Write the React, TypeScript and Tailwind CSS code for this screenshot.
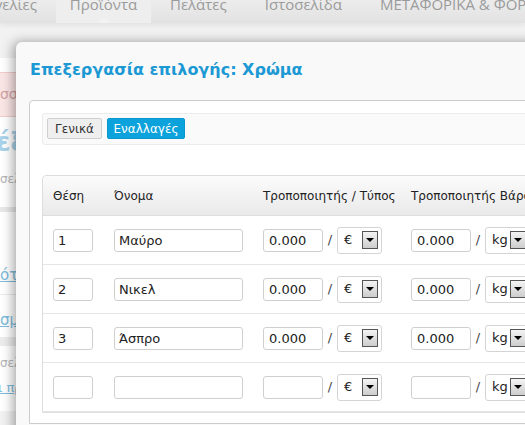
import React from "react"

const navItems = ["Πελάτες", "Ιστοσελίδα", "ΜΕΤΑΦΟΡΙΚΑ & ΦΟΡΟΛΟΓΙΑ"]

const rows = [
  { pos: "1", name: "Μαύρο", price: "0.000", weight: "0.000" },
  { pos: "2", name: "Νικελ", price: "0.000", weight: "0.000" },
  { pos: "3", name: "Άσπρο", price: "0.000", weight: "0.000" },
  { pos: "", name: "", price: "", weight: "" },
]

function Field({ value, className }: { value: string; className: string }) {
  return (
    <div
      className={`h-[23px] border border-[#cfcfcf] rounded-[3px] bg-white px-[4px] text-[13px] leading-[21px] text-[#222] whitespace-nowrap overflow-hidden ${className}`}
    >
      {value}
    </div>
  )
}

function Select({ value }: { value: string }) {
  return (
    <div className="flex items-center justify-between shrink-0 w-[45px] h-[27px] border border-[#d4d4d4] rounded-[3px] bg-white pl-[6px] pr-[3px] text-[13px] text-[#222]">
      <span>{value}</span>
      <span className="flex items-center justify-center w-[16px] h-[18px] border border-[#555] bg-gradient-to-b from-[#f4f4f4] to-[#cdcdcd]">
        <span className="w-0 h-0 border-x-[4px] border-x-transparent border-t-[4px] border-t-black" />
      </span>
    </div>
  )
}

export default function App() {
  return (
    <div className="relative w-[525px] h-[425px] overflow-hidden bg-[#f2f2f2] font-['DejaVu_Sans',sans-serif]">
      {/* top navigation */}
      <nav className="flex h-[23px] bg-gradient-to-b from-[#ececec] to-[#e2e2e2] text-[15px] text-[#9b9b9b] font-['Open_Sans',sans-serif] whitespace-nowrap shadow-[0_2px_6px_rgba(0,0,0,0.08)]">
        <div className="flex justify-end shrink-0 w-[56px] pr-[19px]">
          <span className="shrink-0 mt-[-3px] leading-[15px]">Παραγγελίες</span>
        </div>
        <div className="relative flex justify-center shrink-0 w-[95px] bg-[#eeeeee]">
          <span className="mt-[-3px] leading-[15px]">Προϊόντα</span>
          <span className="absolute bottom-0 left-[42px] w-0 h-0 border-x-[6px] border-x-transparent border-b-[6px] border-b-[#f2f2f2]" />
        </div>
        {navItems.map((item) => (
          <div key={item} className="shrink-0 px-[19px]">
            <span className="block mt-[-3px] leading-[15px]">{item}</span>
          </div>
        ))}
      </nav>

      {/* page behind the dialog */}
      <div className="mt-[35px] bg-white text-[13px] whitespace-nowrap">
        <div className="h-[14px]" />
        <div className="h-[45px] border-y border-[#f1cccc] bg-[#fbe6e6] text-[14px] leading-[43px] text-[#d3a3a3]">σσαρμογή</div>
        <div className="h-[52px] pt-[12px] text-[26px] font-bold leading-[26px] text-[#a9d3ea] ml-[-4px]">έξ</div>
        <div className="h-[38px] text-[12px] text-[#b5b5b5] leading-[20px]">σελίδα</div>
        <div className="h-[5px] bg-[#e8e8e8]" />
        <div className="h-[52px]" />
        <div className="h-[30px] text-[15px] text-[#7ebbdc] underline leading-[22px]">ότητα</div>
        <div className="h-[1px] bg-[#ececec]" />
        <div className="h-[16px]" />
        <div className="h-[26px] text-[15px] text-[#7ebbdc] underline leading-[18px]">σμοί</div>
        <div className="h-[9px] bg-[#ececec]" />
        <div className="h-[35px] pt-[10px] text-[12px] text-[#b5b5b5] leading-[14px]">σελίδα</div>
        <div className="h-[30px] text-[13px] text-[#7ebbdc] underline leading-[14px] ml-[-2px]">ι προϊόντα</div>
      </div>

      {/* dialog */}
      <div className="absolute left-[16px] top-[42px] w-[540px] h-[400px] bg-[#f9f9f9] rounded-tl-[6px] shadow-[-3px_0_12px_rgba(0,0,0,0.35)]">
        <h2 className="h-[58px] pl-[14px] pt-[18px] text-[16px] font-bold leading-[20px] text-[#1c99d4] whitespace-nowrap">
          Επεξεργασία επιλογής: Χρώμα
        </h2>
        <div className="ml-[13px] h-[324px] border border-[#cccccc] rounded-tl-[4px] bg-white p-[12px]">
          {/* tabs */}
          <div className="flex gap-[5px] h-[32px] border border-[#ececec] rounded-[3px] bg-[#fafafa] p-[4px] text-[12px]">
            <div className="flex items-center justify-center w-[55px] h-[21px] border border-[#cfcfcf] rounded-[2px] bg-[#efefef] text-[#333]">
              Γενικά
            </div>
            <div className="flex items-center justify-center w-[78px] h-[21px] border border-[#0a97cf] rounded-[2px] bg-[#0ca3dc] text-white">
              Εναλλαγές
            </div>
          </div>

          {/* options table */}
          <div className="mt-[30px] border border-[#dddddd] rounded-tl-[4px] bg-white">
            <div className="grid grid-cols-[61px_149px_148px_1fr] items-center h-[40px] border-b border-[#dddddd] bg-gradient-to-b from-[#fbfbfb] to-[#eaeaea] pl-[10px] text-[12px] text-[#222] whitespace-nowrap rounded-tl-[4px]">
              <span>Θέση</span>
              <span>Όνομα</span>
              <span>Τροποποιητής / Τύπος</span>
              <span>Τροποποιητής Βάρους</span>
            </div>
            {rows.map((r, i) => (
              <div
                key={i}
                className="grid grid-cols-[61px_149px_148px_1fr] items-center h-[49px] border-b border-[#e6e6e6] pl-[10px]"
              >
                <Field value={r.pos} className="w-[40px]" />
                <Field value={r.name} className="w-[129px]" />
                <div className="flex items-center">
                  <Field value={r.price} className="w-[60px] pl-[5px]" />
                  <span className="w-[14px] text-center text-[13px] text-[#444]">/</span>
                  <Select value="€" />
                </div>
                <div className="flex items-center">
                  <Field value={r.weight} className="w-[60px] pl-[5px] shrink-0" />
                  <span className="w-[14px] shrink-0 text-center text-[13px] text-[#444]">/</span>
                  <Select value="kg" />
                </div>
              </div>
            ))}
          </div>
        </div>
      </div>
    </div>
  )
}
